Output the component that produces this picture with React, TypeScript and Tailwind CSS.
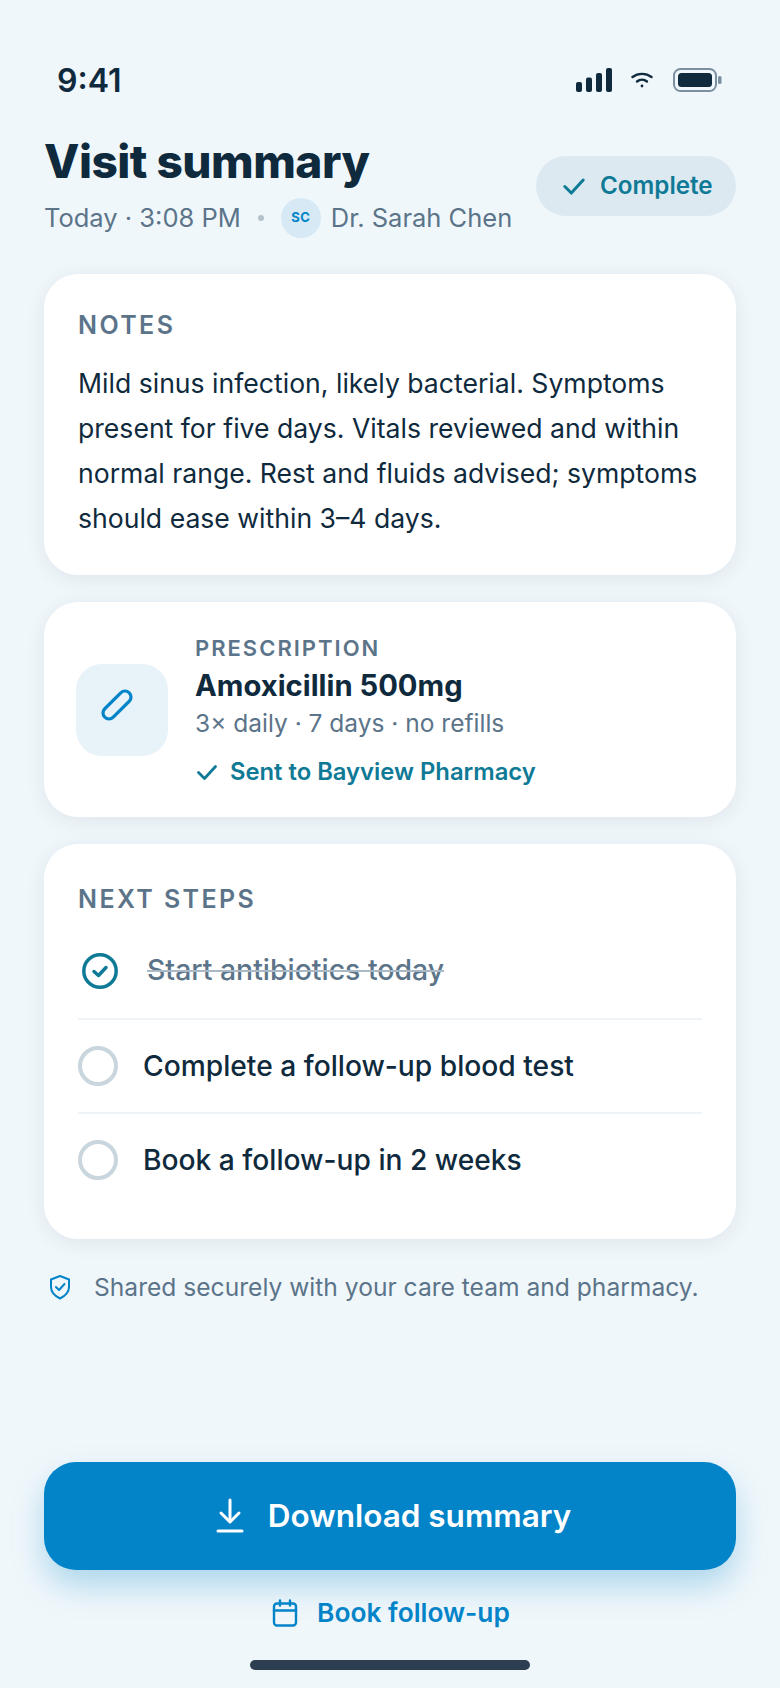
import React from "react";

const ink = "text-[#0f2a3d]";

function Check({ className }: { className: string }) {
  return (
    <svg viewBox="0 0 24 24" fill="none" stroke="currentColor" strokeWidth="2.8" strokeLinecap="round" strokeLinejoin="round" className={className}>
      <path d="M3.5 12.5 L9.5 18.5 L20.5 6.5" />
    </svg>
  );
}

function Step({ text }: { text: string }) {
  return (
    <div className="flex items-center h-[94px] border-t-2 border-[#edf3f7]">
      <div className="w-[40px] h-[40px] rounded-full border-[4px] border-[#c9d6de] shrink-0" />
      <span className={`ml-[25px] text-[28.2px] font-[550] ${ink}`}>{text}</span>
    </div>
  );
}

export default function App() {
  return (
    <div className="w-[780px] h-[1688px] bg-[#f0f7fb] flex flex-col px-[44px] relative overflow-hidden font-['Inter',sans-serif]">
      {/* status bar */}
      <div className="flex items-center justify-between h-[40px] mt-[60px] pl-[13px] pr-[14px]">
        <span className={`text-[32px] font-semibold mt-[1px] ${ink}`}>9:41</span>
        <div className="flex items-center">
          <svg width="36" height="24" viewBox="0 0 36 24" fill="#0f2a3d">
            <rect x="0" y="14" width="6" height="10" rx="2" />
            <rect x="10" y="9.5" width="6" height="14.5" rx="2" />
            <rect x="20" y="5" width="6" height="19" rx="2" />
            <rect x="30" y="0" width="6" height="24" rx="2" />
          </svg>
          <svg width="22" height="16" viewBox="0 0 22 16" fill="none" stroke="#0f2a3d" strokeWidth="2.4" strokeLinecap="round" className="ml-[19px]">
            <path d="M1.5 5 C7 0.8 15 0.8 20.5 5" />
            <path d="M6 9.5 C9 7 13 7 16 9.5" />
            <circle cx="11" cy="14" r="1.4" fill="#0f2a3d" stroke="none" />
          </svg>
          <svg width="49" height="26" viewBox="0 0 49 26" className="ml-[20px]">
            <rect x="1" y="2" width="42" height="22" rx="6.5" fill="none" stroke="#7b8fa0" strokeWidth="2" />
            <rect x="5" y="6" width="34" height="14" rx="3.5" fill="#0f2a3d" />
            <rect x="45" y="9" width="3.5" height="8" rx="1.5" fill="#7b8fa0" />
          </svg>
        </div>
      </div>

      {/* header */}
      <div className="flex items-start justify-between mt-[33px]">
        <div>
          <h1 className={`text-[46px] leading-[56px] font-extrabold tracking-[-0.5px] ${ink}`}>Visit summary</h1>
          <div className="flex items-center mt-[9px] text-[25.5px] text-[#5b7489] h-[40px]">
            <span>Today · 3:08 PM</span>
            <span className="w-[6px] h-[6px] rounded-full bg-[#b4c2cc] ml-[17px]" />
            <span className="w-[40px] h-[40px] rounded-full bg-[#d6e9f5] text-[#0384c9] text-[13px] font-bold tracking-[0.5px] flex items-center justify-center ml-[17px]">SC</span>
            <span className="ml-[10px]">Dr. Sarah Chen</span>
          </div>
        </div>
        <div className="flex items-center h-[60px] w-[200px] mt-[23px] rounded-full bg-[#dce9f1] pl-[25px] text-[#0f7a96] text-[24.2px] font-semibold">
          <Check className="w-[26px] h-[26px] mr-[13px]" />
          Complete
        </div>
      </div>

      {/* notes */}
      <div className="mt-[36px] h-[301px] bg-white rounded-[34px] px-[34px] pt-[36px] shadow-[0_4px_20px_rgba(15,42,61,0.08)]">
        <div className="text-[25px] leading-[30px] font-semibold tracking-[2.4px] text-[#5b7489]">NOTES</div>
        <p className={`mt-[21px] text-[26.6px] leading-[45px] ${ink}`}>
          Mild sinus infection, likely bacterial. Symptoms present for five days. Vitals reviewed and within normal range. Rest and fluids advised; symptoms should ease within 3–4 days.
        </p>
      </div>

      {/* prescription */}
      <div className="mt-[27px] h-[215px] bg-white rounded-[34px] pl-[32px] flex items-center shadow-[0_4px_20px_rgba(15,42,61,0.08)]">
        <div className="w-[92px] h-[92px] rounded-[26px] bg-[#e7f2f9] flex items-center justify-center">
          <svg width="32" height="32" viewBox="0 0 32 32" fill="none" stroke="#0384c9" strokeWidth="3.2" className="mr-[10px] mb-[9px]">
            <rect x="-1.3" y="10" width="34.6" height="12" rx="6" transform="rotate(-45 16 16)" />
          </svg>
        </div>
        <div className="ml-[27px] mt-[3px] flex flex-col">
          <div className="text-[22px] leading-[24px] font-semibold tracking-[2px] text-[#5b7489]">PRESCRIPTION</div>
          <div className={`text-[29.2px] leading-[36px] font-bold mt-[8px] ${ink}`}>Amoxicillin 500mg</div>
          <div className="text-[24.5px] leading-[30px] text-[#5b7489] mt-[4px]">3× daily · 7 days · no refills</div>
          <div className="flex items-center text-[23.8px] leading-[30px] font-semibold text-[#0f7a96] mt-[19px]">
            <Check className="w-[24px] h-[24px] mr-[11px]" />
            Sent to Bayview Pharmacy
          </div>
        </div>
      </div>

      {/* next steps */}
      <div className="mt-[27px] h-[395px] bg-white rounded-[34px] px-[34px] pt-[40px] shadow-[0_4px_20px_rgba(15,42,61,0.08)]">
        <div className="text-[25px] leading-[30px] font-semibold tracking-[2.4px] text-[#5b7489]">NEXT STEPS</div>
        <div className="flex items-center h-[95px] mt-[9px]">
          <svg width="36" height="36" viewBox="0 0 36 36" fill="none" className="ml-[4px] shrink-0">
            <circle cx="18" cy="18" r="16.2" stroke="#0f7a96" strokeWidth="3.5" />
            <path d="M12 18.5 L16.5 22.5 L24 14.5" stroke="#0f7a96" strokeWidth="3.5" strokeLinecap="round" strokeLinejoin="round" />
          </svg>
          <span className="ml-[29px] text-[28.4px] font-[550] text-[#5b7489] line-through decoration-[#a9bac6] decoration-2">Start antibiotics today</span>
        </div>
        <Step text="Complete a follow-up blood test" />
        <Step text="Book a follow-up in 2 weeks" />
      </div>

      {/* secure */}
      <div className="flex items-center mt-[33px] text-[24.6px] leading-[30px] text-[#5b7489]">
        <svg width="24" height="26" viewBox="0 0 24 26" fill="none" stroke="#0384c9" strokeWidth="2" strokeLinecap="round" strokeLinejoin="round" className="ml-[4px]">
          <path d="M12 2 L21 5.5 V13 C21 18.5 17 22 12 24.5 C7 22 3 18.5 3 13 V5.5 Z" />
          <path d="M8 13 L11 16 L16.5 10" />
        </svg>
        <span className="ml-[22px]">Shared securely with your care team and pharmacy.</span>
      </div>

      {/* actions */}
      <div className="mt-auto flex flex-col items-stretch">
        <div className="h-[108px] rounded-[32px] bg-[#0384c9] pl-[7px] flex items-center justify-center text-white text-[31.5px] font-semibold shadow-[0_16px_32px_rgba(3,132,201,0.28)]">
          <svg width="28" height="36" viewBox="0 0 28 36" fill="none" stroke="currentColor" strokeWidth="3" strokeLinecap="round" strokeLinejoin="round" className="mr-[24px]">
            <path d="M14 2 V23" />
            <path d="M5 15 L14 24 L23 15" />
            <path d="M2 33 H26" />
          </svg>
          Download summary
        </div>
        <div className="flex items-center justify-center h-[40px] mt-[23px] pl-[2px] text-[#0384c9] text-[26.3px] font-semibold">
          <svg width="26" height="28" viewBox="0 0 26 28" fill="none" stroke="currentColor" strokeWidth="2.4" strokeLinecap="round" strokeLinejoin="round" className="mr-[19px]">
            <rect x="2" y="4.5" width="22" height="22" rx="3" />
            <path d="M2 11.5 H24" />
            <path d="M8 1.5 V6.5 M18 1.5 V6.5" />
          </svg>
          Book follow-up
        </div>
        <div className="w-[280px] h-[10px] rounded-full bg-[#2c3e4f] self-center mt-[27px] mb-[18px]" />
      </div>
    </div>
  );
}
